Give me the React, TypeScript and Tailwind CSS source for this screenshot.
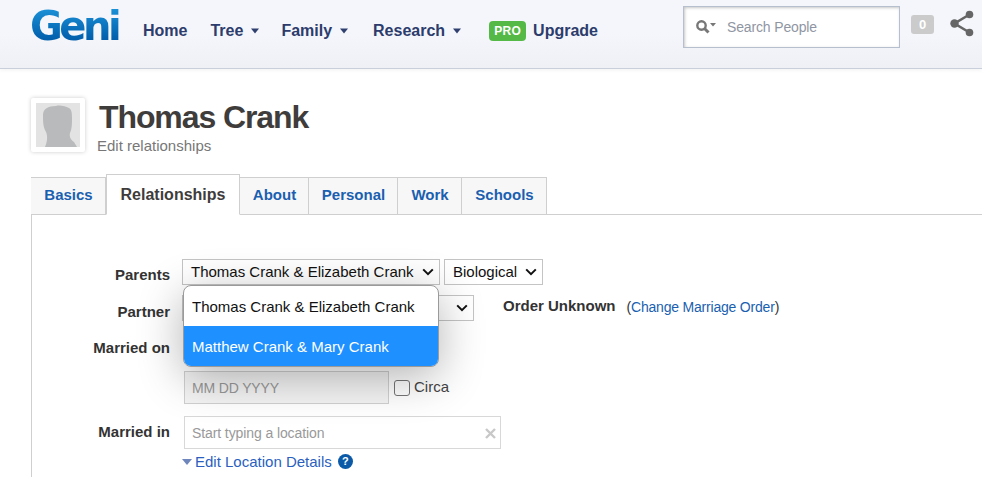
import React from "react";

const Caret = () => (
  <svg width="8" height="6" viewBox="0 0 8 6" className="ml-[8px]">
    <path d="M0 0.5h8L4 5.5z" fill="#2f3f6e" />
  </svg>
);

const Chevron = () => (
  <svg width="12" height="8" viewBox="0 0 12 8" className="shrink-0">
    <path d="M1.2 1.4L6 6.2l4.8-4.8" fill="none" stroke="#111" strokeWidth="2" />
  </svg>
);

const NavItem = ({ label, caret, className }: { label: string; caret?: boolean; className: string }) => (
  <div className={`flex items-center text-[16px] font-bold text-[#2c3c6c] ${className}`}>
    <span>{label}</span>
    {caret && <Caret />}
  </div>
);

const Tab = ({ label, className }: { label: string; className: string }) => (
  <div className={`h-[38px] flex items-center justify-center pl-[1px] pb-[2px] bg-[#f7f7f7] border border-[#cfcfcf] border-l-0 text-[15px] font-bold text-[#1a5fb0] ${className}`}>
    {label}
  </div>
);

const Label = ({ children, className = "" }: { children: React.ReactNode; className?: string }) => (
  <div className={`w-[138px] text-right text-[15px] font-bold text-[#333] shrink-0 ${className}`}>{children}</div>
);

export default function App() {
  return (
    <div className="w-[982px] h-[477px] overflow-hidden bg-white relative font-['Liberation_Sans',Arial,sans-serif]">
      <header className="h-[69px] border-b border-[#c9d0dc] bg-gradient-to-b from-[#f5f6fb] via-[#f5f6fb] to-[#eef0f5] flex items-start shadow-[0_2px_3px_rgba(0,0,0,0.04)]">
        <div className="ml-[30px] mt-[3px] w-[90px] text-[40px] leading-[46px] font-bold tracking-[-3.5px] bg-gradient-to-b from-[#1f9ae0] to-[#004f9e] bg-clip-text text-transparent font-['DejaVu_Sans',sans-serif]">
          Geni
        </div>
        <nav className="flex items-center h-[20px] mt-[21px]">
          <NavItem label="Home" className="ml-[23px]" />
          <NavItem label="Tree" caret className="ml-[23px]" />
          <NavItem label="Family" caret className="ml-[22px]" />
          <NavItem label="Research" caret className="ml-[25px]" />
          <span className="ml-[28px] w-[37px] h-[20px] rounded-[4px] bg-[#55b947] text-white text-[12px] font-bold flex items-center justify-center tracking-[0.3px]">PRO</span>
          <NavItem label="Upgrade" className="ml-[7px]" />
        </nav>
        <div className="ml-auto flex items-start">
          <div className="mt-[6px] w-[217px] h-[42px] bg-white border border-[#b6bfce] shadow-[inset_1px_1px_3px_rgba(0,0,0,0.22)] flex items-center pl-[11px]">
            <svg width="22" height="16" viewBox="0 0 22 16">
              <circle cx="6.5" cy="6.5" r="4.2" fill="none" stroke="#777" strokeWidth="2.4" />
              <path d="M9.5 9.5l4 4" stroke="#777" strokeWidth="3" />
              <path d="M15 4h6l-3 3.5z" fill="#777" />
            </svg>
            <span className="ml-[10px] pt-[1px] text-[14px] tracking-[-0.15px] text-[#8f96a3]">Search People</span>
          </div>
          <div className="mt-[15px] ml-[11px] w-[23px] h-[19px] rounded-[3px] bg-[#cbcbcb] text-white text-[13px] font-bold flex items-center justify-center">0</div>
          <svg width="26" height="28" viewBox="0 0 26 28" className="mt-[10px] ml-[15px] mr-[7px]">
            <path d="M20.5 4.5L5.5 13.5l15 9" fill="none" stroke="#666" strokeWidth="2.6" />
            <circle cx="20.5" cy="4.5" r="3.8" fill="#666" />
            <circle cx="5.5" cy="13.5" r="4.2" fill="#666" />
            <circle cx="20.5" cy="22.5" r="3.8" fill="#666" />
          </svg>
        </div>
      </header>

      <div className="pl-[31px]">
        <div className="flex h-[105px] pt-[29px]">
          <div className="w-[54px] h-[54px] bg-white shadow-[0_0_4px_rgba(0,0,0,0.2)] rounded-[2px] flex items-center justify-center shrink-0">
            <div className="w-[44px] h-[44px] bg-[#e2e3e2] overflow-hidden">
              <svg viewBox="0 0 44 44" width="44" height="44">
                <path d="M7 12C7 6 12 3 20 3c4-1 9 0 13 2 3 2 3 6 3 10 0 5 0 11-2 15-1 4 1 7 4 9l3 5H9c2-4 3-11 1-15C7 24 7 18 7 12z" fill="#b9babb" />
              </svg>
            </div>
          </div>
          <div className="ml-[12px]">
            <h1 className="ml-[2px] text-[32px] leading-[38px] font-bold text-[#3f3c3c] tracking-[-1.1px]">Thomas Crank</h1>
            <div className="text-[15px] leading-[16px] mt-[2px] text-[#777]">Edit relationships</div>
          </div>
        </div>

        <div className="h-[1px]" />
        <div className="flex items-end h-[40px] relative z-10">
          <Tab label="Basics" className="w-[75px] border-l" />
          <div className="w-[134px] h-[41px] bg-white border border-[#cfcfcf] border-b-white flex items-center justify-center text-[16px] font-bold text-[#3f3c3c]">Relationships</div>
          <Tab label="About" className="w-[69px]" />
          <Tab label="Personal" className="w-[89px]" />
          <Tab label="Work" className="w-[64px]" />
          <Tab label="Schools" className="w-[85px]" />
        </div>

        <section className="border-l border-t border-[#cfcfcf] -mt-[1px] h-[263px] pt-[44px]">
          <div className="flex items-center h-[26px]">
            <Label className="pt-[6px]">Parents</Label>
            <div className="ml-[12px] w-[258px] h-[26px] border border-[#c4c4c4] flex items-center justify-between pl-[8px] pr-[5px] text-[15px] text-[#111]">
              <span className="pt-[1px]">Thomas Crank &amp; Elizabeth Crank</span> <Chevron />
            </div>
            <div className="ml-[4px] w-[99px] h-[26px] border border-[#c4c4c4] flex items-center justify-between pl-[8px] pr-[5px] text-[15px] text-[#111]">
              <span className="pt-[1px]">Biological</span> <Chevron />
            </div>
          </div>

          <div className="flex items-center h-[26px] mt-[10px]">
            <Label className="pt-[8px]">Partner</Label>
            <div className="ml-[12px] w-[292px] h-[26px] border border-[#c4c4c4] flex items-center justify-end pr-[5px]">
              <Chevron />
            </div>
            <span className="ml-[29px] pb-[4px] text-[15px] font-bold text-[#333]">Order Unknown</span>
            <span className="ml-[11px] pb-[2px] text-[14px] tracking-[-0.2px] text-[#333]">
              (<span className="text-[#1a5fb0]">Change Marriage Order</span>)
            </span>
          </div>

          <div className="flex items-center h-[20px] mt-[17px]">
            <Label>Married on</Label>
          </div>

          <div className="flex items-center h-[33px] mt-[13px] pl-[152px]">
            <div className="w-[205px] h-[33px] bg-[#f4f4f4] border border-[#d0d0d0] flex items-center pl-[7px] pt-[1px] text-[14px] tracking-[-0.15px] text-[#999]">MM DD YYYY</div>
            <div className="ml-[5px] w-[16px] h-[16px] rounded-[3px] border border-[#767676] bg-white" />
            <span className="ml-[4px] text-[15px] text-[#444]">Circa</span>
          </div>

          <div className="flex items-center h-[33px] mt-[12px]">
            <Label>Married in</Label>
            <div className="ml-[14px] w-[317px] h-[33px] border border-[#d8d8d8] flex items-center justify-between pl-[7px] pr-[4px] pt-[1px] text-[14px] tracking-[-0.1px] text-[#999]">
              Start typing a location
              <svg width="11" height="11" viewBox="0 0 11 11"><path d="M1 1l9 9M10 1l-9 9" stroke="#c8c8c8" strokeWidth="2.4" /></svg>
            </div>
          </div>

          <div className="flex items-center h-[18px] mt-[4px] pl-[150px] text-[15px] text-[#2a5fc0]">
            <svg width="10" height="6" viewBox="0 0 10 6" className="mr-[3px]"><path d="M0 0h10L5 6z" fill="#6f86bd" /></svg>
            Edit Location Details
            <span className="ml-[6px] mb-[2px] w-[15px] h-[15px] rounded-full bg-[#0b5aa8] text-white text-[11px] font-bold flex items-center justify-center">?</span>
          </div>
        </section>
      </div>

      <div className="absolute left-[183px] top-[285px] w-[256px] h-[82px] bg-white rounded-[8px] border border-[#9a9a9a] overflow-hidden shadow-[0_10px_45px_rgba(0,0,0,0.3)] z-20">
        <div className="h-[40px] flex items-center pl-[8px] pt-[2px] text-[15px] text-[#111]">Thomas Crank &amp; Elizabeth Crank</div>
        <div className="h-[40px] flex items-center pl-[8px] pt-[2px] text-[15px] text-white bg-[#1e90ff]">Matthew Crank &amp; Mary Crank</div>
      </div>
    </div>
  );
}
